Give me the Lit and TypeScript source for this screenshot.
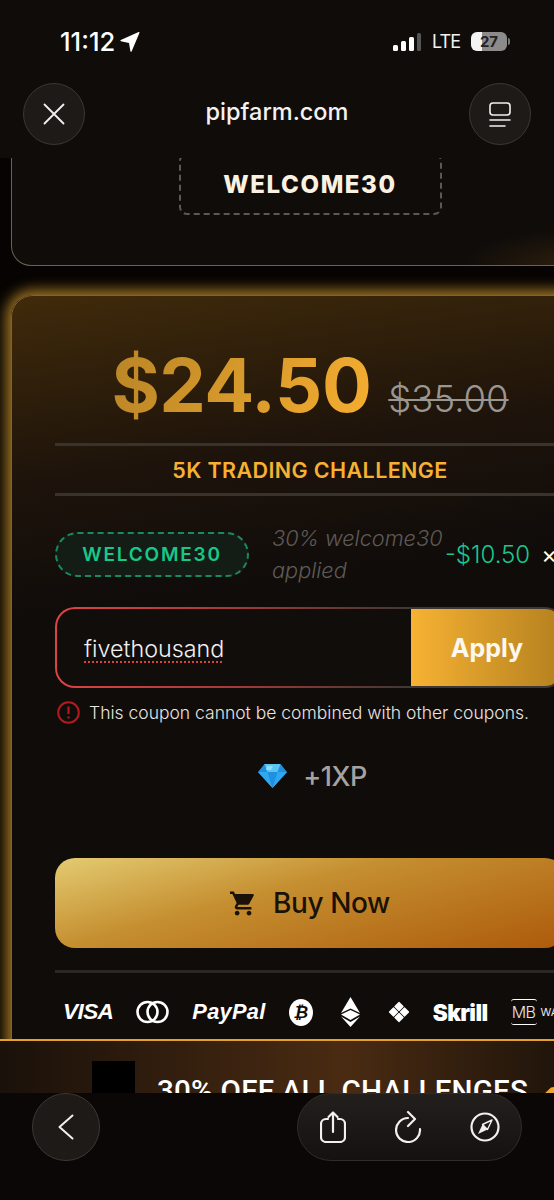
import { LitElement, html, css } from 'lit'
import { customElement } from 'lit/decorators.js'

@customElement('app-root')
export class AppRoot extends LitElement {
	static styles = css`
		:host {
			display: block;
			width: 554px;
			height: 1200px;
			overflow: hidden;
			background: #060302;
			color: #fff;
			font-family: Inter, 'Noto Sans', sans-serif;
		}

		.app {
			display: flex;
			flex-direction: column;
			height: 1200px;
		}

		/* browser chrome, top */
		.chrome {
			flex: none;
			position: relative;
			z-index: 2;
			height: 158px;
			background: #100c0a;
		}
		.status {
			display: flex;
			align-items: center;
			height: 83px;
			padding: 0 44px 0 60px;
			box-sizing: border-box;
		}
		.time {
			font-size: 25.5px;
			font-weight: 500;
		}
		.spacer {
			flex: 1;
		}
		.lte {
			margin: 0 11px;
			font-size: 18px;
			font-weight: 400;
			letter-spacing: -1px;
			color: #f1f1f1;
		}
		.battery {
			display: flex;
			align-items: center;
			justify-content: center;
			width: 36px;
			height: 19px;
			border-radius: 6px;
			background: linear-gradient(90deg, #f4f4f4 0 30%, #8c8b8a 30%);
			color: #222;
			font-size: 15px;
			font-weight: 700;
		}
		.nub {
			width: 2px;
			height: 7px;
			margin-left: 1px;
			border-radius: 0 2px 2px 0;
			background: #777;
		}
		.nav {
			display: flex;
			align-items: center;
			justify-content: space-between;
			padding: 0 23px;
		}
		.round {
			display: flex;
			align-items: center;
			justify-content: center;
			box-sizing: border-box;
			width: 62px;
			height: 62px;
			border-radius: 50%;
			background: #1e1a18;
			border: 1px solid #3c3733;
		}
		.host {
			font-size: 23.5px;
			font-weight: 500;
			margin-top: -6px;
			color: #f4f2f0;
		}

		/* page */
		.page {
			flex: 1;
			min-height: 0;
			overflow: hidden;
			padding-left: 11px;
		}
		.prev {
			box-sizing: border-box;
			display: flex;
			align-items: flex-end;
			justify-content: center;
			width: 598px;
			height: 108px;
			padding-bottom: 50px;
			background:
				radial-gradient(ellipse 110px 36px at 560px 108px, rgba(110, 74, 18, 0.3), transparent),
				#100c0a;
			border: 1.5px solid #6b6252;
			border-top: 0;
			border-radius: 0 0 20px 20px;
		}
		.code-box {
			box-sizing: border-box;
			flex: none;
			display: flex;
			align-items: center;
			justify-content: center;
			width: 263px;
			height: 62px;
			border: 2px dashed #5c5854;
			border-radius: 8px;
			color: #fbf1e1;
			font-size: 24px;
			font-weight: 800;
			letter-spacing: 1.6px;
		}
		.card {
			box-sizing: border-box;
			width: 598px;
			height: 780px;
			margin-top: 29px;
			padding: 49px 43px 0;
			border: 1.5px solid #85622a;
			border-radius: 22px;
			background: linear-gradient(172deg, #402a0a 0, #1d130b 190px, #100c0a 320px);
			box-shadow: 0 0 14px 5px rgba(170, 125, 40, 0.95);
		}
		.price-row {
			display: flex;
			align-items: baseline;
			justify-content: center;
			gap: 17px;
			height: 80px;
			line-height: 80px;
		}
		.price {
			font-size: 74px;
			font-weight: 700;
			letter-spacing: -0.5px;
			background: linear-gradient(110deg, #b98526, #f6ae30);
			-webkit-background-clip: text;
			background-clip: text;
			color: transparent;
		}
		.old {
			font-size: 36.5px;
			font-weight: 300;
			color: #9a9692;
			text-decoration: line-through;
			text-decoration-thickness: 2px;
		}
		.rule {
			height: 3px;
			background: #39332c;
		}
		.price-row + .rule {
			margin-top: 18px;
		}
		.plan {
			display: flex;
			align-items: center;
			justify-content: center;
			height: 47px;
			color: #f7b032;
			font-size: 21.5px;
			font-weight: 600;
			letter-spacing: 0.4px;
		}
		.coupon {
			display: flex;
			align-items: center;
			height: 64px;
			margin-top: 26px;
		}
		.pill {
			box-sizing: border-box;
			display: flex;
			align-items: center;
			justify-content: center;
			flex: none;
			width: 194px;
			height: 45px;
			border: 2px dashed #178a63;
			border-radius: 23px;
			background: #141d15;
			color: #16c98b;
			font-size: 19px;
			font-weight: 600;
			letter-spacing: 1.8px;
		}
		.note {
			flex: none;
			width: 173px;
			margin-left: 23px;
			color: #5f5a56;
			font-size: 21.7px;
			font-style: italic;
			font-weight: 300;
			line-height: 32px;
			white-space: nowrap;
		}
		.off {
			flex: none;
			color: #17c98c;
			font-size: 24px;
			font-weight: 300;
			white-space: nowrap;
		}
		.remove {
			flex: none;
			margin-left: 11px;
			font-size: 24px;
		}
		.field {
			box-sizing: border-box;
			display: flex;
			height: 81px;
			margin-top: 21px;
			border: 2px solid transparent;
			border-radius: 20px;
			background:
				linear-gradient(#110d0b, #110d0b) padding-box,
				linear-gradient(90deg, #de4344 0, #a43a38 35%, #3d3835 70%) border-box;
			overflow: hidden;
		}
		.value {
			flex: 1;
			display: flex;
			align-items: center;
			padding: 2px 0 0 27px;
			font-size: 23.3px;
			font-weight: 300;
			color: #f2f0ee;
		}
		.value span {
			text-decoration: underline dotted #d9403f 2px;
			text-underline-offset: 4px;
		}
		.apply {
			display: flex;
			align-items: center;
			justify-content: center;
			flex: none;
			width: 152px;
			background: linear-gradient(90deg, #f6b233, #b4801f);
			font-size: 25px;
			font-weight: 700;
			color: #fdf8ee;
		}
		.error {
			display: flex;
			align-items: center;
			gap: 9px;
			height: 24px;
			margin: 12px 0 0 2px;
			color: #e9e5e1;
			font-size: 17.5px;
			font-weight: 300;
			white-space: nowrap;
		}
		.xp {
			display: flex;
			align-items: center;
			justify-content: center;
			gap: 16px;
			height: 30px;
			margin-top: 37px;
			padding-left: 5px;
			color: #a5a2a0;
			font-size: 27px;
			font-weight: 500;
			letter-spacing: -0.5px;
		}
		.buy {
			display: flex;
			align-items: center;
			justify-content: center;
			gap: 18px;
			height: 90px;
			margin-top: 67px;
			border-radius: 20px;
			background: linear-gradient(165deg, #e4cb72 0, #c58f30 40%, #ad5a0b 100%);
			color: #1a1208;
			font-size: 28px;
			font-weight: 500;
			letter-spacing: -0.4px;
		}
		.buy + .rule {
			margin-top: 22px;
			background: #2a2725;
		}
		.logos {
			display: flex;
			align-items: center;
			gap: 23px;
			height: 40px;
			margin-top: 19px;
			padding-left: 8px;
			white-space: nowrap;
		}
		.visa {
			font-family: 'Liberation Sans', sans-serif;
			font-size: 22.6px;
			font-weight: 700;
			font-style: italic;
			letter-spacing: -0.6px;
		}
		.paypal {
			font-family: 'Liberation Sans', sans-serif;
			font-size: 21.8px;
			font-weight: 700;
			font-style: italic;
			letter-spacing: 0.3px;
		}
		.btc {
			display: flex;
			align-items: center;
			justify-content: center;
			width: 27px;
			height: 27px;
			border-radius: 50%;
			background: #fff;
			color: #100c0a;
			font-family: 'DejaVu Sans', sans-serif;
			font-size: 17px;
			font-weight: 700;
			font-style: italic;
		}
		.skrill {
			font-size: 22.5px;
			font-weight: 900;
			letter-spacing: -0.6px;
		}
		.mb {
			display: flex;
			align-items: center;
			gap: 4px;
			font-size: 11px;
			color: #e8e8e8;
		}
		.mb-mark {
			box-sizing: border-box;
			display: flex;
			align-items: center;
			justify-content: center;
			width: 26px;
			height: 26px;
			border-top: 1.5px solid #fff;
			border-bottom: 1.5px solid #fff;
			border-radius: 3px;
			font-size: 16px;
			font-weight: 300;
			letter-spacing: -0.5px;
		}

		/* sticky promo */
		.promo {
			flex: none;
			position: relative;
			z-index: 1;
			box-sizing: border-box;
			display: flex;
			align-items: flex-start;
			height: 54px;
			padding: 20px 0 0 92px;
			overflow: hidden;
			border-top: 2px solid #e6a12d;
			background: linear-gradient(90deg, #1a110a 0, #4a2b12 62%, #20150b 100%);
		}
		.promo-box {
			flex: none;
			width: 43px;
			height: 60px;
			background: #000;
		}
		.promo-text {
			margin: 15px 0 0 22px;
			font-family: Roboto, sans-serif;
			font-size: 29.6px;
			line-height: 30px;
			font-weight: 500;
			letter-spacing: 0.2px;
			white-space: nowrap;
		}
		.promo-flame {
			position: absolute;
			right: 0;
			top: 46px;
		}

		/* browser chrome, bottom */
		.toolbar {
			flex: none;
			position: relative;
			z-index: 2;
			display: flex;
			justify-content: space-between;
			height: 107px;
			padding: 0 32px;
			background: #0b0706;
		}
		.toolbar .round {
			width: 68px;
			height: 68px;
		}
		.tools {
			box-sizing: border-box;
			display: flex;
			align-items: center;
			justify-content: space-between;
			width: 225px;
			height: 68px;
			padding: 0 21px 0 22px;
			border: 1px solid #302c29;
			border-radius: 34px;
			background: linear-gradient(180deg, #221f1d, #141110);
		}
		svg {
			display: block;
			flex: none;
		}
	`

	render() {
		return html`
			<div class="app">
				<header class="chrome">
					<div class="status">
						<span class="time">11:12</span>
						<svg width="20" height="20" viewBox="0 0 20 20" style="margin-left:5px">
							<path fill="#fff" d="M19.500.8 11.600 19.400c-.3.6-1.100.5-1.200-.2L9 10.900.9 9.200C.2 9 .2 8.200.8 8L18.600.1c.6-.2 1.100.2.9.7z" />
						</svg>
						<span class="spacer"></span>
						<svg width="28" height="18" viewBox="0 0 28 18">
							<rect x="0" y="12" width="5" height="6" rx="1.500" fill="#fff" />
							<rect x="8" y="8" width="5" height="10" rx="1.500" fill="#fff" />
							<rect x="16" y="4" width="5" height="14" rx="1.500" fill="#fff" />
							<rect x="24" y="0" width="4" height="18" rx="1.500" fill="#555" />
						</svg>
						<span class="lte">LTE</span>
						<span class="battery">27</span>
						<span class="nub"></span>
					</div>
					<div class="nav">
						<div class="round">
							<svg width="22" height="22" viewBox="0 0 22 22" fill="none" stroke="#f2f0ee" stroke-width="1.800" stroke-linecap="round">
								<path d="M1.500 1.500l19 19M20.500 1.500l-19 19" />
							</svg>
						</div>
						<div class="host">pipfarm.com</div>
						<div class="round">
							<svg width="22" height="25" viewBox="0 0 22 25" fill="none" stroke="#f2f0ee" stroke-width="1.600" stroke-linecap="round">
								<rect x="1" y="1" width="20" height="12" rx="3" />
								<path d="M1 18h20M1 24h15" />
							</svg>
						</div>
					</div>
				</header>

				<main class="page">
					<section class="prev">
						<div class="code-box">WELCOME30</div>
					</section>

					<section class="card">
						<div class="price-row">
							<span class="price">$24.50</span>
							<span class="old">$35.00</span>
						</div>
						<div class="rule"></div>
						<div class="plan">5K TRADING CHALLENGE</div>
						<div class="rule"></div>

						<div class="coupon">
							<div class="pill">WELCOME30</div>
							<div class="note">30% welcome30<br />applied</div>
							<div class="off">-$10.50</div>
							<div class="remove">×</div>
						</div>

						<div class="field">
							<div class="value"><span>fivethousand</span></div>
							<div class="apply">Apply</div>
						</div>
						<div class="error">
							<svg width="23" height="23" viewBox="0 0 23 23" fill="none" stroke="#b3191f" stroke-width="2">
								<circle cx="11.500" cy="11.500" r="10.300" />
								<path d="M11.500 5.500v7.500M11.500 15.500v2" stroke-width="2.200" />
							</svg>
							This coupon cannot be combined with other coupons.
						</div>

						<div class="xp">
							<svg width="29" height="24" viewBox="0 0 29 24">
								<path fill="#1f8fdf" d="M6.500 0h16L29 8 14.500 24 0 8z" />
								<path fill="#5cc3f5" d="M6.500 0h16l-3 8H9.500z" />
								<path fill="#2fa8ee" d="M0 8h9.500l5 16zM29 8h-9.500l-5 16z" />
								<path fill="#8fdcfb" d="M9 2h6l-2 4H8z" />
							</svg>
							+1XP
						</div>

						<div class="buy">
							<svg width="25" height="25" viewBox="1 2 21 20">
								<path fill="#1a1208" d="M7 18c-1.100 0-1.990.9-1.990 2S5.900 22 7 22s2-.9 2-2-.9-2-2-2zM1 2v2h2l3.600 7.590-1.350 2.450c-.16.28-.25.61-.25.96 0 1.100.9 2 2 2h12v-2H7.420c-.14 0-.25-.11-.25-.25l.03-.12.9-1.630h7.450c.75 0 1.410-.41 1.750-1.030l3.580-6.490c.08-.14.12-.31.12-.48 0-.55-.45-1-1-1H5.210l-.94-2H1zm16 16c-1.100 0-1.990.9-1.990 2s.89 2 1.990 2 2-.9 2-2-.9-2-2-2z" />
							</svg>
							Buy Now
						</div>
						<div class="rule"></div>

						<div class="logos">
							<span class="visa">VISA</span>
							<svg width="33" height="24" viewBox="0 0 33 24" fill="none" stroke="#fff" stroke-width="2.600">
								<circle cx="11.500" cy="12" r="10" />
								<circle cx="21.500" cy="12" r="10" />
							</svg>
							<span class="paypal">PayPal</span>
							<span class="btc">₿</span>
							<svg width="29" height="30" viewBox="0 0 29 30" fill="#fff">
								<path d="M14.500 0v11.500L5 16zM14.500 0v11.500L24 16z" />
								<path d="M14.500 13l9.500 4.500-9.500 5.500L5 17.500z" />
								<path d="M5 19.500l9.500 5.500 9.500-5.500-9.500 10.500z" />
							</svg>
							<svg width="22" height="22" viewBox="0 0 22 22" fill="#fff" stroke="#fff" stroke-width="1.200" stroke-linejoin="round">
								<path d="M11 1.500l4 4-4 4-4-4zM11 12.500l4 4-4 4-4-4zM5.500 7l4 4-4 4-4-4zM16.500 7l4 4-4 4-4-4z" />
							</svg>
							<span class="skrill">Skrill</span>
							<span class="mb"><span class="mb-mark">MB</span>WAY</span>
						</div>
					</section>
				</main>

				<aside class="promo">
					<div class="promo-box"></div>
					<div class="promo-text">30% OFF ALL CHALLENGES</div>
					<svg class="promo-flame" width="11" height="8" viewBox="0 0 11 8">
						<path fill="#f0a52c" d="M0 8 8 .5 11 0v8z" />
					</svg>
				</aside>

				<footer class="toolbar">
					<div class="round">
						<svg width="16" height="26" viewBox="0 0 16 26" fill="none" stroke="#f2f0ee" stroke-width="2" stroke-linecap="round" stroke-linejoin="round">
							<path d="M14.500 1.500 1.500 13l13 11.500" />
						</svg>
					</div>
					<div class="tools">
						<svg width="26" height="32" viewBox="0 0 26 32" fill="none" stroke="#f2f0ee" stroke-width="2.200" stroke-linecap="round" stroke-linejoin="round">
							<path d="M8 8H6a5 5 0 0 0-5 5v13a5 5 0 0 0 5 5h14a5 5 0 0 0 5-5V13a5 5 0 0 0-5-5h-2" />
							<path d="M13 21V1.500M8.500 6 13 1.500 17.500 6" />
						</svg>
						<svg width="27" height="32" viewBox="0 0 27 32" fill="none" stroke="#f2f0ee" stroke-width="2.200" stroke-linecap="round" stroke-linejoin="round">
							<path d="M25 18A12 12 0 1 1 13 7" />
							<path d="M13 1l7 7-7 7" />
						</svg>
						<svg width="30" height="30" viewBox="0 0 30 30" fill="none" stroke="#f2f0ee" stroke-width="2.200">
							<circle cx="15" cy="15" r="13.500" />
							<path d="M8 22l4.500-9.500 5 5z" fill="#f2f0ee" stroke="none" />
							<path d="M22 8l-4.500 9.500-5-5z" stroke-width="1.400" stroke-linejoin="round" />
						</svg>
					</div>
				</footer>
			</div>
		`
	}
}
